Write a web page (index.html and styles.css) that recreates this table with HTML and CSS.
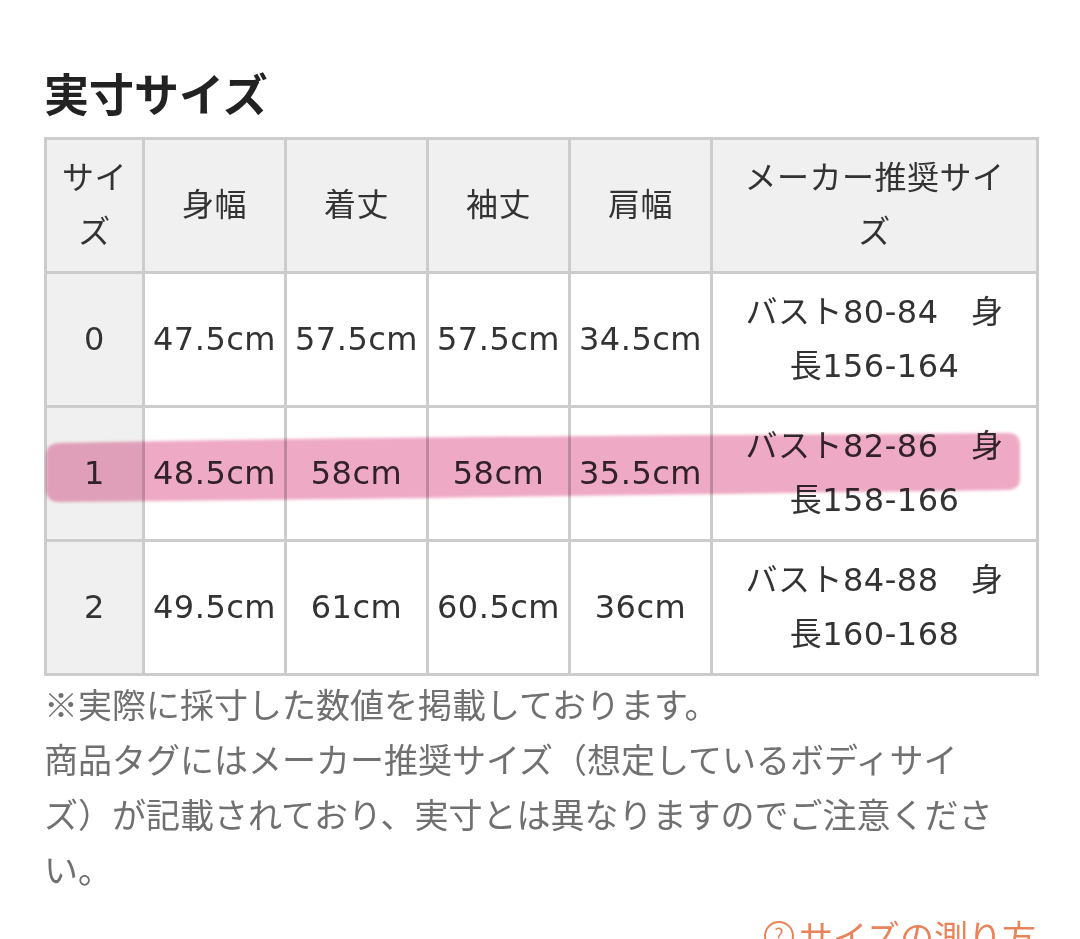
FILE: index.html
```html
<!DOCTYPE html>
<html lang="ja">
<head>
<meta charset="utf-8">
<title>実寸サイズ</title>
<link rel="stylesheet" href="styles.css">
</head>
<body>
<div class="page">
  <h2 class="title">実寸サイズ</h2>
  <div class="table-wrap">
    <table class="size-table">
      <colgroup>
        <col class="c-size">
        <col class="c-num">
        <col class="c-num">
        <col class="c-num">
        <col class="c-num">
        <col class="c-maker">
      </colgroup>
      <thead>
        <tr>
          <th class="size-cell">サイズ</th>
          <th>身幅</th>
          <th>着丈</th>
          <th>袖丈</th>
          <th>肩幅</th>
          <th class="maker">メーカー推奨サイズ</th>
        </tr>
      </thead>
      <tbody>
        <tr>
          <td class="size-cell">0</td>
          <td>47.5cm</td>
          <td>57.5cm</td>
          <td>57.5cm</td>
          <td>34.5cm</td>
          <td class="maker">バスト80-84　身長156-164</td>
        </tr>
        <tr>
          <td class="size-cell">1</td>
          <td>48.5cm</td>
          <td>58cm</td>
          <td>58cm</td>
          <td>35.5cm</td>
          <td class="maker">バスト82-86　身長158-166</td>
        </tr>
        <tr>
          <td class="size-cell">2</td>
          <td>49.5cm</td>
          <td>61cm</td>
          <td>60.5cm</td>
          <td>36cm</td>
          <td class="maker">バスト84-88　身長160-168</td>
        </tr>
      </tbody>
    </table>
    <svg class="marker" width="992" height="90" viewBox="0 0 992 90" aria-hidden="true">
      <defs>
        <filter id="soft" x="-5%" y="-30%" width="110%" height="160%">
          <feGaussianBlur stdDeviation="1.6"/>
        </filter>
      </defs>
      <path d="M 16 18 Q 300 12 700 10 L 964 8 Q 976 8 976 20 L 976 54 Q 976 64 964 65 Q 600 70 300 74 L 16 77 Q 2 77 2 64 L 2 31 Q 2 18 16 18 Z" fill="#eea9c4" filter="url(#soft)"/>
    </svg>
  </div>
  <p class="note">※実際に採寸した数値を掲載しております。</p>
  <p class="note">商品タグにはメーカー推奨サイズ（想定しているボディサイズ）が記載されており、実寸とは異なりますのでご注意ください。</p>
  <div class="link-row">
    <a class="measure-link" href="#">
      <svg class="q-icon" width="32" height="32" viewBox="0 0 32 32" aria-hidden="true">
        <circle cx="16" cy="16" r="14" fill="none" stroke="#e8845c" stroke-width="2"/>
        <text x="16" y="23" text-anchor="middle" font-size="20" fill="#e8845c" font-family="Noto Sans CJK JP, sans-serif">?</text>
      </svg>サイズの測り方
    </a>
  </div>
</div>
</body>
</html>
```

FILE: styles.css
```css
html, body {
  margin: 0;
  padding: 0;
  background: #ffffff;
}

body {
  font-family: "Noto Sans CJK JP", sans-serif;
  color: #333333;
  overflow: hidden;
}

.page {
  width: 992px;
  margin-left: 44px;
  padding-top: 66px;
}

.title {
  margin: 0 0 17px 0;
  font-size: 45px;
  line-height: 54px;
  font-weight: 700;
  color: #222222;
}

.table-wrap {
  position: relative;
}

.size-table {
  width: 992px;
  table-layout: fixed;
  border-collapse: collapse;
  border: 3px solid #cccccc;
  font-family: "DejaVu Sans", "Noto Sans CJK JP", sans-serif;
  font-size: 32px;
  line-height: 54px;
  letter-spacing: 0.5px;
  color: #333333;
}

.c-size { width: 98px; }
.c-num { width: 142px; }
.c-maker { width: 326px; }

.size-table th,
.size-table td {
  border: 3px solid #cccccc;
  padding: 11px 4px 12px 4px;
  text-align: center;
  vertical-align: middle;
  font-weight: 400;
}

.size-table th {
  background: #f0f0f0;
  height: 108px;
}

.size-table td {
  height: 108px;
}

.size-table td.size-cell {
  background: #f0f0f0;
}

.size-table .maker {
  padding-left: 21px;
  padding-right: 21px;
}

.marker {
  position: absolute;
  left: 0;
  top: 288px;
  mix-blend-mode: multiply;
  pointer-events: none;
}

.note {
  margin: 0;
  max-width: 960px;
  font-size: 34px;
  line-height: 55px;
  color: #707070;
  text-spacing-trim: space-all;
}

.link-row {
  margin-top: 12px;
  display: flex;
  justify-content: flex-end;
}

.measure-link {
  display: inline-flex;
  align-items: center;
  gap: 4px;
  font-size: 34px;
  line-height: 55px;
  color: #e8845c;
  text-decoration: none;
}

.q-icon {
  display: block;
}
```
